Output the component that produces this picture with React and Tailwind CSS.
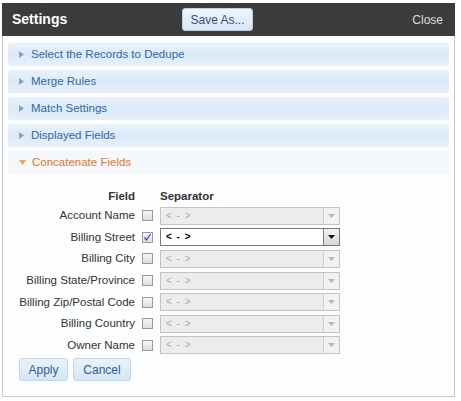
import React from 'react';

const sections = [
  'Select the Records to Dedupe',
  'Merge Rules',
  'Match Settings',
  'Displayed Fields',
];

const rows = [
  { name: 'Account Name', checked: false },
  { name: 'Billing Street', checked: true },
  { name: 'Billing City', checked: false },
  { name: 'Billing State/Province', checked: false },
  { name: 'Billing Zip/Postal Code', checked: false },
  { name: 'Billing Country', checked: false },
  { name: 'Owner Name', checked: false },
];

const Checkbox = ({ checked }) => (
  <div className="w-[11px] h-[11px] border border-[#999] bg-gradient-to-b from-[#f6f6f6] to-[#dedede] flex items-center justify-center">
    {checked && (
      <svg width="9" height="9" viewBox="0 0 9 9">
        <path d="M1.5 4.5 L3.5 7 L7.5 1" fill="none" stroke="#3a4f9f" strokeWidth="1.3" />
      </svg>
    )}
  </div>
);

const Select = ({ enabled }) => (
  <div
    className={
      enabled
        ? 'w-[180px] h-[18px] border border-[#7a7a7a] bg-white flex items-stretch'
        : 'w-[180px] h-[18px] border border-[#c4c4c4] bg-[#ececec] flex items-stretch'
    }
  >
    <div
      className={
        enabled
          ? 'flex-1 pl-[5px] text-[10px] leading-[16px] text-black font-bold tracking-[1px]'
          : 'flex-1 pl-[5px] text-[10px] leading-[16px] text-[#a8a8a8] tracking-[1px]'
      }
    >
      {'< - >'}
    </div>
    <div
      className={
        enabled
          ? 'w-[16px] border-l border-[#7a7a7a] bg-gradient-to-b from-[#f2f2f2] to-[#d8d8d8] flex items-center justify-center'
          : 'w-[16px] border-l border-[#d0d0d0] bg-[#f2f2f2] flex items-center justify-center'
      }
    >
      <svg width="7" height="4" viewBox="0 0 7 4">
        <path d="M0 0 H7 L3.5 4 Z" fill={enabled ? '#111' : '#b8b8b8'} />
      </svg>
    </div>
  </div>
);

export default function App() {
  return (
    <div className="w-[461px] h-[401px] bg-white pt-[3px] pl-[2px]" style={{ fontFamily: '"Liberation Sans", Arial, sans-serif' }}>
      <div className="w-[453px] flex flex-col">
        {/* header */}
        <div className="h-[33px] bg-[#3c3c3c] flex items-center justify-between px-[10px] relative">
          <span className="text-white font-bold text-[14px]">Settings</span>
          <div className="absolute left-[180px] top-[5px] w-[71px] h-[23px] rounded-[3px] bg-gradient-to-b from-[#eef5fc] to-[#d8e7f6] border border-[#b9cfe6] flex items-center justify-center text-[12px] text-[#2f5478]">
            Save As...
          </div>
          <span className="text-[#dcdcdc] text-[12px] pr-[2px]">Close</span>
        </div>

        {/* body */}
        <div className="h-[361px] border border-t-0 border-[#c8c8c8] bg-[#fcfdfe] px-[5px] pt-[7px] flex flex-col">
          <div className="flex flex-col gap-[4px]">
            {sections.map((s) => (
              <div
                key={s}
                className="h-[23px] rounded-[3px] bg-gradient-to-b from-[#e9f2fb] via-[#dceaf7] to-[#e6f0fa] flex items-center pl-[11px] text-[11.5px] text-[#2f6aa3]"
              >
                <svg width="5" height="7" viewBox="0 0 5 7" className="mr-[7px]">
                  <path d="M0 0 L5 3.5 L0 7 Z" fill="#7fa6c9" />
                </svg>
                {s}
              </div>
            ))}
            <div className="h-[23px] rounded-[3px] bg-[#f5f8fb] flex items-center pl-[11px] text-[11.5px] text-[#e0782b]">
              <svg width="7" height="5" viewBox="0 0 7 5" className="mr-[6px]">
                <path d="M0 0 H7 L3.5 5 Z" fill="#f0a445" />
              </svg>
              Concatenate Fields
            </div>
          </div>

          {/* table */}
          <div className="pt-[15px] text-[11.5px] text-[#333]">
            <div className="flex items-center h-[16px] font-bold">
              <div className="w-[127px] text-right">Field</div>
              <div className="pl-[25px]">Separator</div>
            </div>
            <div>
              {rows.map((r) => (
                <div key={r.name} className="h-[21.6px] flex items-center">
                  <div className="w-[127px] text-right whitespace-nowrap">{r.name}</div>
                  <div className="pl-[7px] pr-[7px]">
                    <Checkbox checked={r.checked} />
                  </div>
                  <Select enabled={r.checked} />
                </div>
              ))}
            </div>
          </div>

          <div className="flex gap-[5px] pl-[11px] pt-[2px]">
            <div className="w-[49px] h-[23px] rounded-[3px] bg-gradient-to-b from-[#e9f2fb] to-[#d6e6f5] border border-[#c3d7ea] flex items-center justify-center text-[12px] text-[#2f5f8f]">
              Apply
            </div>
            <div className="w-[58px] h-[23px] rounded-[3px] bg-gradient-to-b from-[#e9f2fb] to-[#d6e6f5] border border-[#c3d7ea] flex items-center justify-center text-[12px] text-[#2f5f8f]">
              Cancel
            </div>
          </div>
        </div>
      </div>
    </div>
  );
}
